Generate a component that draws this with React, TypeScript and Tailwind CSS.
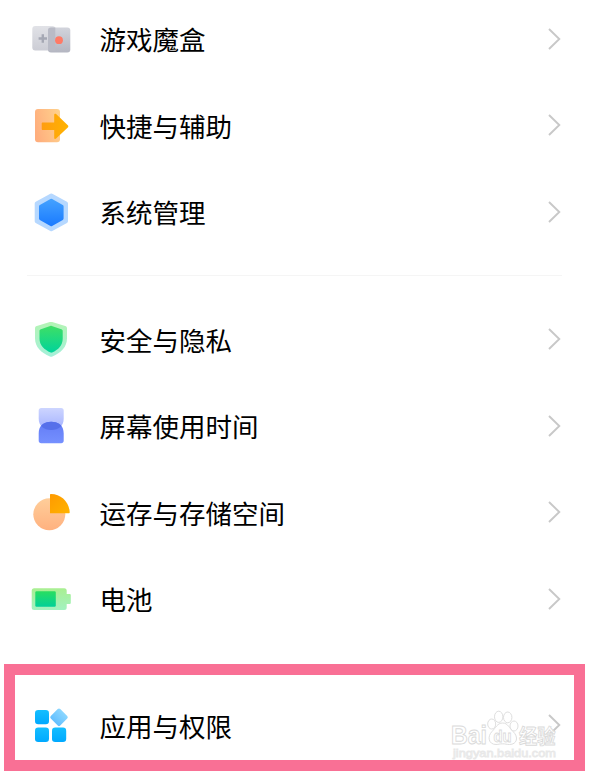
import type { ReactNode } from "react";

function Icon({ children }: { children: ReactNode }) {
  return (
    <svg className="h-11 w-11 shrink-0" viewBox="0 0 44 44" fill="none" aria-hidden="true">
      {children}
    </svg>
  );
}

function Gradient({ id, from, to, slant = false }: { id: string; from: string; to: string; slant?: boolean }) {
  return (
    <linearGradient id={id} x1="0" y1="0" x2={slant ? "1" : "0"} y2="1">
      <stop stopColor={from} />
      <stop offset="1" stopColor={to} />
    </linearGradient>
  );
}

function GameIcon() {
  return (
    <Icon>
      <defs>
        <Gradient id="padLeft" from="#e1e2e7" to="#cccdd5" />
        <Gradient id="padRight" from="#d2d4dc" to="#b4b6c1" />
      </defs>
      <rect x="3.3" y="9" width="23" height="24.5" rx="3" fill="url(#padLeft)" />
      <rect x="19" y="10.5" width="22.3" height="25" rx="3" fill="url(#padRight)" />
      <path d="M19 13.5a3 3 0 0 1 3-3h4.3v23H19z" fill="#b9bbc6" />
      <path d="M13.8 17.3v8.4M9.6 21.5H18" stroke="#a5a8b4" strokeWidth="2.4" />
      <circle cx="30" cy="23.2" r="3.9" fill="#ff7a66" />
    </Icon>
  );
}

function ShortcutIcon() {
  return (
    <Icon>
      <defs>
        <linearGradient id="door" x1="0" y1="0.6" x2="1" y2="0.3">
          <stop stopColor="#ffae7d" />
          <stop offset="1" stopColor="#ffd08c" />
        </linearGradient>
        <linearGradient id="arrow" x1="0" y1="0" x2="1" y2="0">
          <stop stopColor="#ff9d10" />
          <stop offset="1" stopColor="#ffb300" />
        </linearGradient>
      </defs>
      <rect x="6" y="6" width="25" height="33.2" rx="3" fill="url(#door)" />
      <path
        d="M13.7 19.5h11.5v-7.6c0-1.2 1.1-1.6 1.9-.8l11.7 11.1c.7.7.7 1.6 0 2.3L27.1 35.6c-.8.8-1.9.4-1.9-.8v-7.7H13.7c-.6 0-1-.4-1-1v-5.6c0-.6.4-1 1-1z"
        fill="url(#arrow)"
      />
    </Icon>
  );
}

function SystemIcon() {
  return (
    <Icon>
      <defs>
        <Gradient id="core" from="#42a0ff" to="#1c7cff" />
      </defs>
      <path d="M22.3 5.5 37 13.6V31.2L22.3 39.3 7.7 31.2V13.6z" fill="#b6d8ff" stroke="#b6d8ff" strokeWidth="4" strokeLinejoin="round" />
      <path d="M22.3 10.4 32.9 16.5V28.5L22.3 34.6 11.7 28.5V16.5z" fill="url(#core)" stroke="url(#core)" strokeWidth="3.4" strokeLinejoin="round" />
    </Icon>
  );
}

function ShieldIcon() {
  return (
    <Icon>
      <defs>
        <Gradient id="shieldRim" from="#b4f4b4" to="#a4f0d9" />
        <Gradient id="shieldFill" from="#3edf65" to="#00d39b" />
      </defs>
      <path
        d="M20.8 5.1c.8-.3 1.6-.3 2.4 0l13 4c1.1.4 1.8 1.1 1.8 2.4v9.7c0 8.8-6 14.7-14.6 18.2-.9.4-1.6.4-2.5 0C12.2 35.9 6 30 6 21.2v-9.7c0-1.3.7-2 1.8-2.4z"
        fill="url(#shieldRim)"
      />
      <path
        d="M21.2 9c.6-.2 1-.2 1.6 0l9.5 3.2c.9.3 1.4.8 1.4 1.7v7.8c0 6.4-4.2 11-10.6 13.800-.5.2-.9.2-1.4 0-6.4-2.8-11.2-7.4-11.2-13.8v-7.8c0-.9.5-1.4 1.4-1.700z"
        fill="url(#shieldFill)"
      />
    </Icon>
  );
}

function ScreenTimeIcon() {
  return (
    <Icon>
      <defs>
        <Gradient id="glassTop" from="#cdd5ff" to="#a3b1ff" />
        <Gradient id="glassBottom" from="#637cf5" to="#7590ff" />
        <clipPath id="topShape">
          <path d="M12.2 4h20c1.5 0 2.5 1 2.5 2.5v8c0 7.5-5 11.5-12.5 11.5S9.7 22 9.7 14.5v-8C9.7 5 10.7 4 12.2 4z" />
        </clipPath>
      </defs>
      <path d="M12.2 4h20c1.5 0 2.5 1 2.5 2.5v8c0 7.5-5 11.5-12.5 11.5S9.7 22 9.7 14.5v-8C9.7 5 10.7 4 12.2 4z" fill="url(#glassTop)" />
      <path d="M9.7 29.5c0-7.7 5-11.7 12.5-11.7s12.5 4 12.5 11.7v7.3c0 1.5-1 2.5-2.5 2.5h-20c-1.5 0-2.5-1-2.5-2.5z" fill="url(#glassBottom)" />
      <path clipPath="url(#topShape)" d="M9.7 29.5c0-7.7 5-11.7 12.5-11.7s12.5 4 12.5 11.7z" fill="#5670ea" />
    </Icon>
  );
}

function StorageIcon() {
  return (
    <Icon>
      <defs>
        <Gradient id="disc" from="#ffce9a" to="#ffb17f" />
        <Gradient id="slice" from="#ff9a00" to="#ffb300" slant />
      </defs>
      <circle cx="20.3" cy="24.3" r="16" fill="url(#disc)" />
      <path d="M21 5c0-.6.4-1 1-1 10.1 0 18.3 8 18.7 18.3 0 .6-.4 1-1 1H21z" fill="url(#slice)" />
    </Icon>
  );
}

function BatteryIcon() {
  return (
    <Icon>
      <defs>
        <Gradient id="cell" from="#a9ef91" to="#a2f2c1" />
        <Gradient id="charge" from="#29de60" to="#00d098" />
      </defs>
      <path
        d="M5.2 11.3h30a2.5 2.5 0 0 1 2.5 2.5v3.1h2.8c.8 0 1.3.5 1.3 1.3v7.6c0 .8-.5 1.3-1.3 1.3h-2.8v3.4a2.5 2.5 0 0 1-2.5 2.5h-30a2.5 2.5 0 0 1-2.5-2.5V13.8a2.5 2.5 0 0 1 2.5-2.5z"
        fill="url(#cell)"
      />
      <rect x="6.3" y="14.3" width="20.5" height="15.4" rx="1.2" fill="url(#charge)" />
    </Icon>
  );
}

function AppsIcon() {
  return (
    <Icon>
      <defs>
        <Gradient id="tile" from="#14beff" to="#00a9ff" />
        <Gradient id="diamond" from="#8bd6ff" to="#62bfff" />
      </defs>
      <rect x="6" y="7" width="14" height="14.2" rx="3.2" fill="url(#tile)" />
      <rect x="6" y="24.6" width="14" height="14.4" rx="3.2" fill="url(#tile)" />
      <rect x="23" y="24.6" width="14.2" height="14.4" rx="3.2" fill="url(#tile)" />
      <rect x="23.3" y="7.6" width="13.4" height="13.4" rx="1.8" transform="rotate(45 30 14.3)" fill="url(#diamond)" />
    </Icon>
  );
}

function Chevron() {
  return (
    <svg className="ml-auto h-6 w-4 shrink-0" viewBox="0 0 16 24" fill="none" aria-hidden="true">
      <path d="M3 2 13.3 12 3 22" stroke="#c8c8c8" strokeWidth="1.9" />
    </svg>
  );
}

function Row({ icon, label }: { icon: ReactNode; label: string }) {
  return (
    <div className="flex h-[86.6px] items-center pr-[27px] pl-[29px]">
      {icon}
      <span className="ml-[26.5px] pt-[1.2px] text-[26.5px] leading-none whitespace-nowrap text-black">{label}</span>
      <Chevron />
    </div>
  );
}

function Watermark() {
  return (
    <svg className="pointer-events-none absolute top-[33px] right-[10px] h-[52px] w-[116px]" viewBox="448 708 116 52" aria-hidden="true">
      <g fill="#ffffff" fillOpacity="0.75" stroke="#dadada" strokeWidth="0.9">
        <ellipse cx="491.7" cy="724" rx="4" ry="5" />
        <ellipse cx="498.7" cy="716.8" rx="4.2" ry="5.6" />
        <ellipse cx="507.7" cy="717.4" rx="4.2" ry="5.4" />
        <ellipse cx="514" cy="726" rx="4" ry="5" />
        <path d="M502.7 723c5.3 0 6.8 5.500 10.300 8.500 6 5.500 4 13-3.500 13-3 0-4-.7-7-.7s-3.500.7-6.500.7c-7.500 0-9-8-4-13 3.700-3.500 5.200-8.500 10.700-8.500z" />
        <g fontFamily="'Liberation Sans', sans-serif" fontWeight="700">
          <text x="451" y="744" fontSize="25" textLength="36" lengthAdjust="spacingAndGlyphs">Bai</text>
          <text x="493.5" y="741.5" fontSize="16" fillOpacity="1" strokeWidth="0.8" textLength="18" lengthAdjust="spacingAndGlyphs">du</text>
        </g>
        <text x="519" y="743.5" fontFamily="'Noto Sans CJK SC', sans-serif" fontWeight="700" fontSize="20" textLength="36.5" lengthAdjust="spacingAndGlyphs">经验</text>
        <text x="453" y="757" fontFamily="'Liberation Sans', sans-serif" fontWeight="400" fontSize="11.5" fill="#f6f6f6" stroke="#e8e8e8" strokeWidth="0.8" textLength="103" lengthAdjust="spacingAndGlyphs">jingyan.baidu.com</text>
      </g>
    </svg>
  );
}

export default function App() {
  return (
    <main className="flex h-[775px] w-[589px] flex-col overflow-hidden bg-white font-['Noto_Sans_CJK_SC',sans-serif]">
      <section className="-mt-[4.5px]">
        <Row icon={<GameIcon />} label="游戏魔盒" />
        <Row icon={<ShortcutIcon />} label="快捷与辅助" />
        <Row icon={<SystemIcon />} label="系统管理" />
      </section>
      <hr className="mx-[27px] mt-[20px] mb-[19.7px] border-t border-[#f5f5f5]" />
      <section>
        <Row icon={<ShieldIcon />} label="安全与隐私" />
        <Row icon={<ScreenTimeIcon />} label="屏幕使用时间" />
        <Row icon={<StorageIcon />} label="运存与存储空间" />
        <Row icon={<BatteryIcon />} label="电池" />
      </section>
      <section className="relative mx-1 mt-auto mb-1 flex h-[107px] flex-col justify-center border-[11px] border-[#f97095]">
        <div className="-mx-[15px] pt-[15.5px]">
          <Row icon={<AppsIcon />} label="应用与权限" />
        </div>
        <Watermark />
      </section>
    </main>
  );
}
